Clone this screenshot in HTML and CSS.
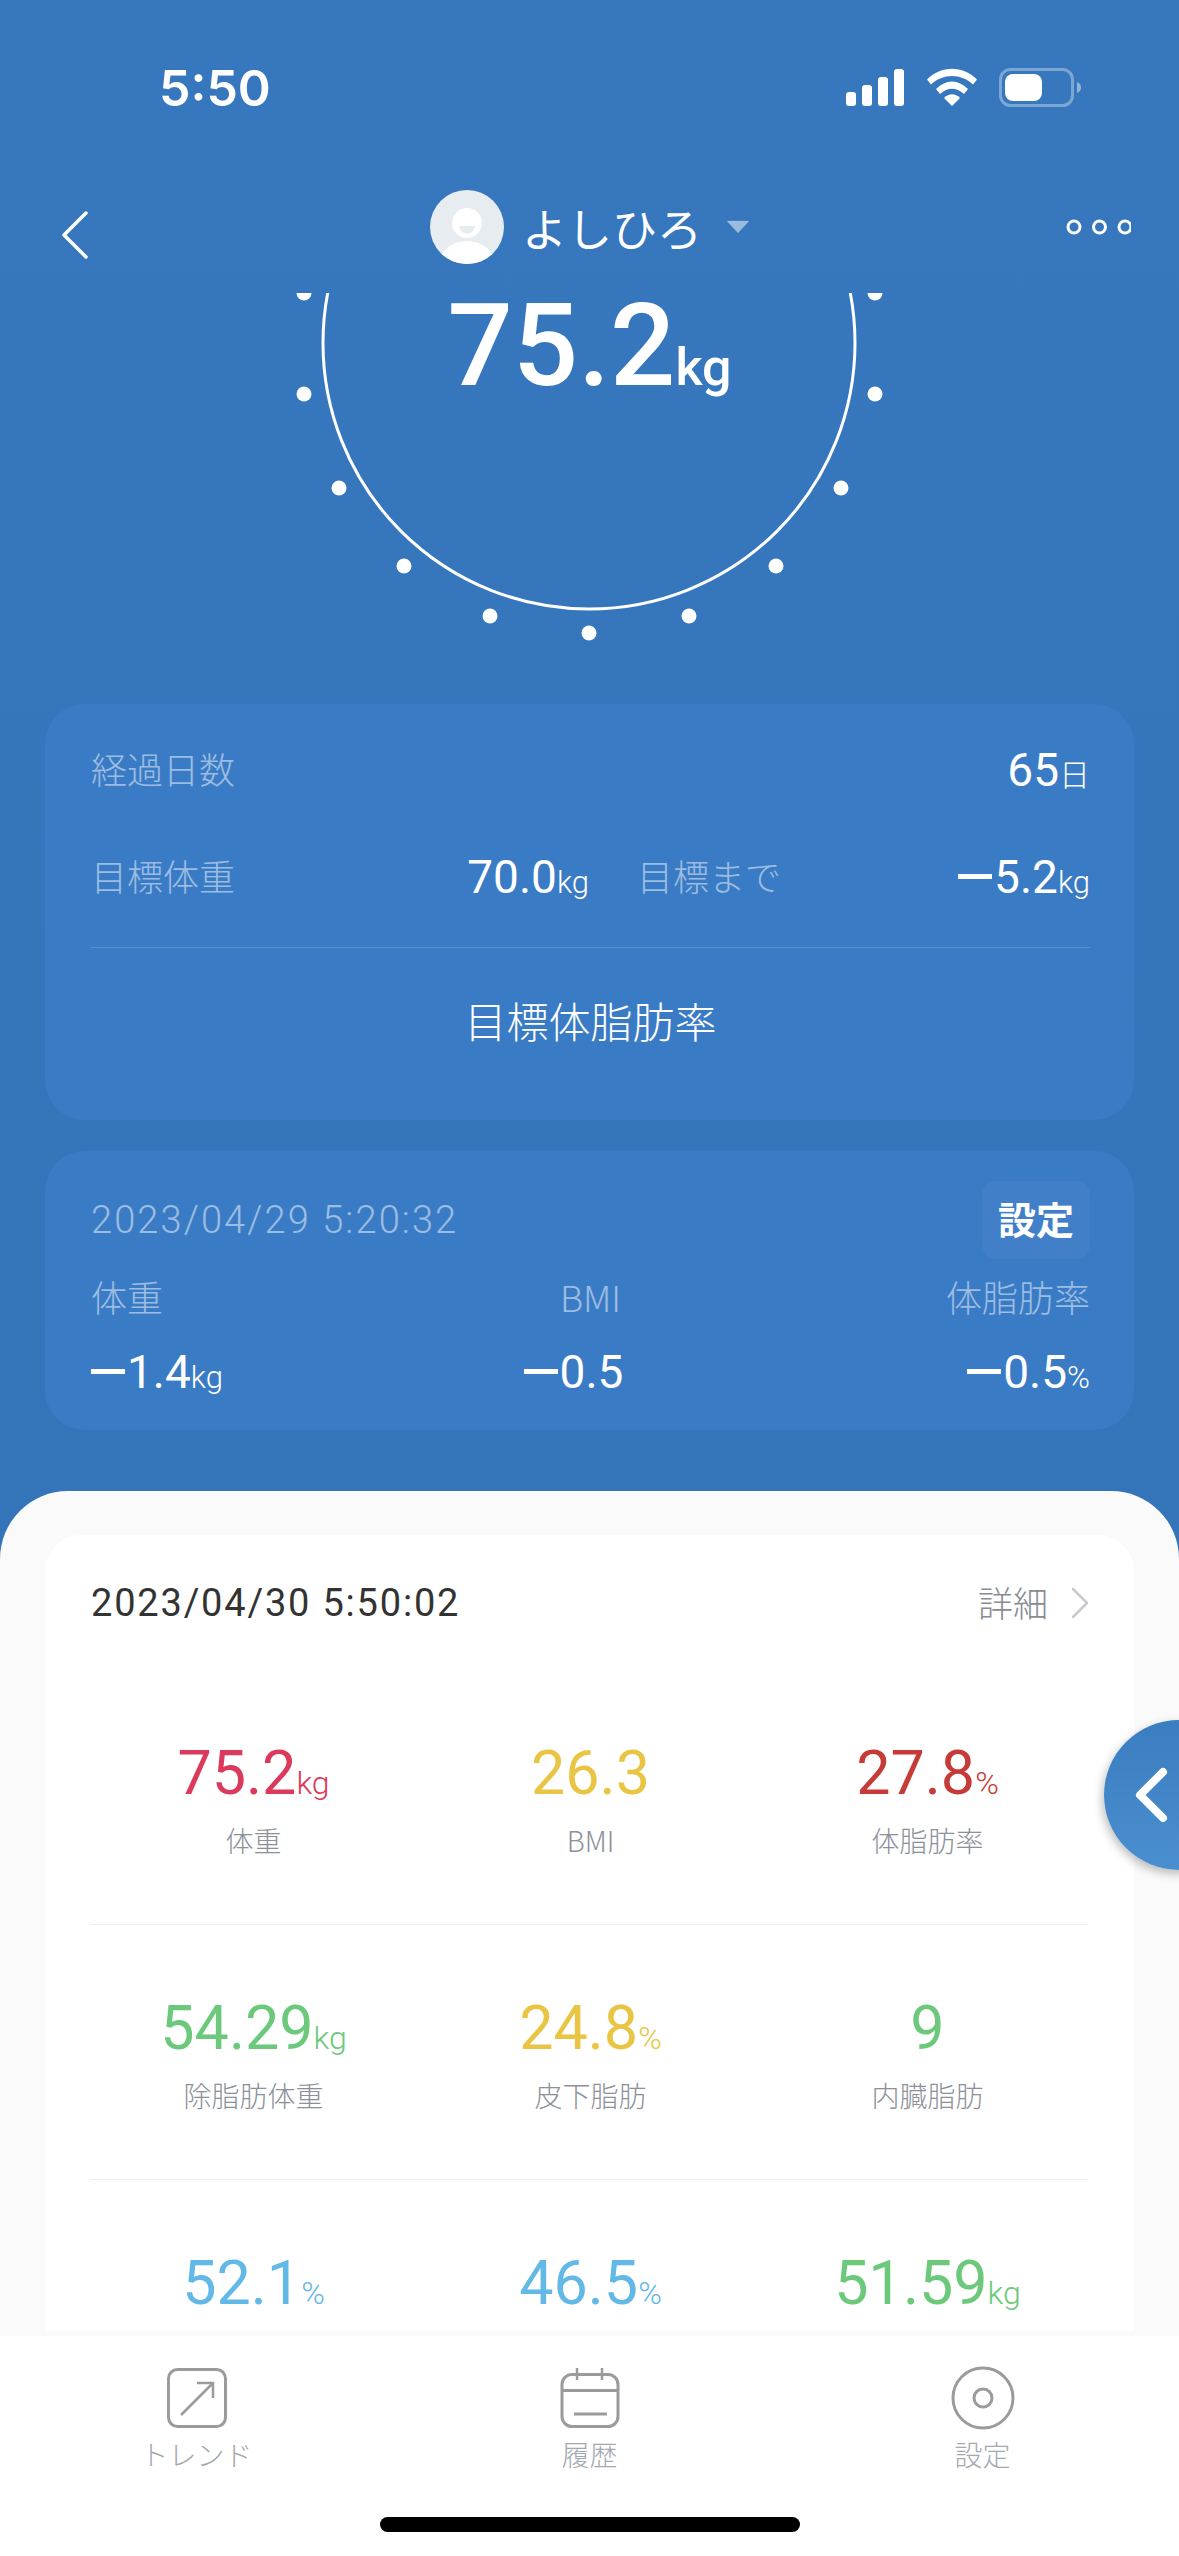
FILE: index.html
```html
<!DOCTYPE html>
<html lang="ja">
<head>
  <meta charset="UTF-8" />
  <meta name="viewport" content="width=device-width, initial-scale=1" />
  <title>体重</title>
  <link rel="stylesheet" href="styles.css">
</head>
<body>
<div class="page">

  <div class="status">
    <span class="time">5:50</span>
    <svg class="status-icons" width="240" height="44" viewBox="845 66 240 44">
      <g fill="#fff">
        <rect x="846" y="92" width="10" height="14" rx="3"/>
        <rect x="862" y="85" width="10" height="21" rx="3"/>
        <rect x="878" y="77" width="10" height="29" rx="3"/>
        <rect x="894" y="69" width="10" height="37" rx="3"/>
        <path d="M927 79.500C941 65 963 65 977 79.500L973 84.500C961 73 943 73 931 84.500Z"/>
        <path d="M936 89C946 79 958 79 968 89L964 94C956 87 948 87 940 94Z"/>
        <path d="M944 98C949 93 955 93 960 98L952 106Z"/>
        <rect x="1005" y="74" width="37" height="27" rx="8"/>
      </g>
      <rect x="1000.500" y="69.500" width="72" height="36" rx="10" fill="none" stroke="#fff" stroke-opacity=".35" stroke-width="3"/>
      <path d="M1077 82C1080 83 1081 85 1081 87.500C1081 90 1080 92 1077 93Z" fill="#fff" fill-opacity=".45"/>
    </svg>
  </div>

  <div class="nav">
    <svg class="nav-back" width="30" height="50" viewBox="0 0 30 50">
      <path d="M26 3L4 25L26 47" fill="none" stroke="#fff" stroke-width="3.500" stroke-linecap="round" stroke-linejoin="round"/>
    </svg>
    <div class="nav-user">
      <svg width="74" height="74" viewBox="0 0 74 74">
        <defs><clipPath id="ava"><circle cx="37" cy="37" r="37"/></clipPath></defs>
        <circle cx="37" cy="37" r="37" fill="#e6ecef"/>
        <circle cx="37" cy="33" r="15" fill="#fff"/>
        <path d="M29 36H45C44 46 30 46 29 36Z" fill="#e6ecef"/>
        <ellipse cx="37" cy="72" rx="27" ry="21" fill="#fff" clip-path="url(#ava)"/>
      </svg>
      <span class="nav-name">よしひろ</span>
      <svg width="24" height="14" viewBox="0 0 24 14">
        <path d="M1 1H23L12 13Z" fill="#fff" fill-opacity=".5" stroke="#fff" stroke-opacity=".1" stroke-linejoin="round"/>
      </svg>
    </div>
    <svg class="nav-more" width="66" height="18" viewBox="0 0 66 18">
      <g fill="none" stroke="#fff" stroke-width="3">
        <circle cx="9" cy="9" r="6"/>
        <circle cx="34.500" cy="9" r="6"/>
        <circle cx="60" cy="9" r="6"/>
      </g>
    </svg>
  </div>

  <div class="gauge">
    <svg width="1179" height="411" viewBox="0 293 1179 411">
      <circle cx="589" cy="343" r="266" fill="none" stroke="#fff" stroke-width="3"/>
      <g fill="#fff">
        <circle cx="304" cy="293" r="7.500"/>
        <circle cx="304" cy="394" r="7.500"/>
        <circle cx="339" cy="488" r="7.500"/>
        <circle cx="404" cy="566" r="7.500"/>
        <circle cx="490" cy="616" r="7.500"/>
        <circle cx="589" cy="633" r="7.500"/>
        <circle cx="689" cy="616" r="7.500"/>
        <circle cx="776" cy="566" r="7.500"/>
        <circle cx="841" cy="488" r="7.500"/>
        <circle cx="875" cy="394" r="7.500"/>
        <circle cx="875" cy="293" r="7.500"/>
      </g>
    </svg>
    <div class="gauge-value">75.2<span class="gauge-unit">kg</span></div>
  </div>

  <section class="goal-card">
    <div class="goal-row">
      <span class="dim">経過日数</span>
      <span class="num">65<small>日</small></span>
    </div>
    <div class="goal-split">
      <div class="goal-row">
        <span class="dim">目標体重</span>
        <span class="num">70.0<small>kg</small></span>
      </div>
      <div class="goal-row">
        <span class="dim">目標まで</span>
        <span class="num"><i class="minus"></i>5.2<small>kg</small></span>
      </div>
    </div>
    <div class="goal-link">目標体脂肪率</div>
  </section>

  <section class="prev-card">
    <div class="prev-head">
      <span class="prev-date">2023/04/29 5:20:32</span>
      <span class="prev-btn">設定</span>
    </div>
    <div class="prev-grid">
      <span class="dim">体重</span>
      <span class="dim">BMI</span>
      <span class="dim">体脂肪率</span>
      <span class="num"><i class="minus"></i>1.4<small>kg</small></span>
      <span class="num no-unit"><i class="minus"></i>0.5</span>
      <span class="num"><i class="minus"></i>0.5<small>%</small></span>
    </div>
  </section>

  <main class="sheet">
    <section class="data-card">
      <div class="data-head">
        <span class="data-date">2023/04/30 5:50:02</span>
        <span class="data-more"><span class="data-more-text">詳細</span>
          <svg width="20" height="34" viewBox="0 0 20 34">
            <path d="M3 3L17 17L3 31" fill="none" stroke="#c8cacf" stroke-width="2.500" stroke-linecap="round" stroke-linejoin="round"/>
          </svg>
        </span>
      </div>

      <div class="metric-row">
        <div class="metric"><div class="val red">75.2<small>kg</small></div><div class="lbl">体重</div></div>
        <div class="metric"><div class="val yellow">26.3</div><div class="lbl">BMI</div></div>
        <div class="metric"><div class="val dark-red">27.8<small>%</small></div><div class="lbl">体脂肪率</div></div>
      </div>
      <div class="metric-row">
        <div class="metric"><div class="val green">54.29<small>kg</small></div><div class="lbl">除脂肪体重</div></div>
        <div class="metric"><div class="val yellow">24.8<small>%</small></div><div class="lbl">皮下脂肪</div></div>
        <div class="metric"><div class="val green">9</div><div class="lbl">内臓脂肪</div></div>
      </div>
      <div class="metric-row">
        <div class="metric"><div class="val blue">52.1<small>%</small></div></div>
        <div class="metric"><div class="val blue">46.5<small>%</small></div></div>
        <div class="metric"><div class="val green">51.59<small>kg</small></div></div>
      </div>
    </section>
  </main>

  <nav class="tabbar">
    <div class="tab">
      <svg width="64" height="64" viewBox="0 0 64 64">
        <rect x="3.500" y="3.500" width="57" height="57" rx="9" fill="none" stroke="#9b9b9b" stroke-width="3"/>
        <path d="M16 49L48 17M32 17H48V32" fill="none" stroke="#9b9b9b" stroke-width="2.500"/>
      </svg>
      <span>トレンド</span>
    </div>
    <div class="tab">
      <svg width="64" height="64" viewBox="0 0 64 64">
        <g fill="none" stroke="#9b9b9b" stroke-width="3">
          <rect x="4" y="8.500" width="56" height="52" rx="10"/>
          <path d="M4 24.500H60" />
          <path d="M19 2V14M44 2V14" stroke-width="2.500"/>
          <path d="M16 48H49" />
        </g>
      </svg>
      <span>履歴</span>
    </div>
    <div class="tab">
      <svg width="64" height="64" viewBox="0 0 64 64">
        <circle cx="32" cy="32" r="30" fill="none" stroke="#9b9b9b" stroke-width="3"/>
        <circle cx="32" cy="32" r="9" fill="none" stroke="#9b9b9b" stroke-width="3"/>
      </svg>
      <span>設定</span>
    </div>
    <div class="home-bar"></div>
  </nav>

  <div class="side-btn">
    <svg width="34" height="56" viewBox="0 0 34 56">
      <path d="M29 5L6 28L29 51" fill="none" stroke="#fff" stroke-width="8" stroke-linecap="round" stroke-linejoin="round"/>
    </svg>
  </div>

</div>
</body>
</html>
```

FILE: styles.css
```css
* {
  box-sizing: border-box;
}
body {
  margin: 0;
  background: #fff;
  font-family: "Noto Sans CJK JP", sans-serif;
}
.page {
  position: relative;
  width: 1179px;
  height: 2556px;
  overflow: hidden;
  display: flex;
  flex-direction: column;
  background: linear-gradient(#3677bd, #3475ba 1500px);
  color: #fff;
}

/* status bar */
.status {
  height: 176px;
  flex: none;
  display: flex;
  justify-content: space-between;
  align-items: center;
  padding: 0 94px 0 159px;
}
.time {
  font-family: Inter, sans-serif;
  font-size: 50px;
  font-weight: 600;
}
.status-icons {
  display: block;
}

/* nav */
.nav {
  height: 102px;
  flex: none;
  margin-bottom: 15px;
  display: grid;
  grid-template-columns: 1fr auto 1fr;
  align-items: center;
  padding: 0 48px;
}
.nav-back {
  margin: 16px 0 0 12px;
}
.nav-user {
  display: flex;
  align-items: center;
  margin-left: 1px;
}
.nav-name {
  font-size: 45px;
  margin: 0 24px 0 18px;
}
.nav-more {
  justify-self: end;
}

/* gauge */
.gauge {
  position: relative;
  height: 411px;
  flex: none;
}
.gauge svg {
  display: block;
}
.gauge-value {
  position: absolute;
  top: 0;
  left: 0;
  right: 0;
  text-align: center;
  font-family: Roboto, sans-serif;
  font-size: 115px;
  font-weight: 500;
  line-height: 106px;
}
.gauge-unit {
  font-size: 52px;
  font-weight: 500;
}

/* blue cards */
.goal-card, .prev-card {
  flex: none;
  margin: 0 45px;
  padding: 0 44px 0 46px;
  background: #3a7bc5;
  border-radius: 40px;
}
.goal-card {
  height: 416px;
  padding-top: 34px;
}
.prev-card {
  height: 279px;
  margin-top: 31px;
  padding-top: 30px;
}
.dim {
  margin-bottom: 5px;
  font-size: 36px;
  font-weight: 300;
  color: rgba(255, 255, 255, 0.5);
  white-space: nowrap;
}
.num {
  font-family: Roboto, sans-serif;
  font-size: 46px;
  white-space: nowrap;
}
.num small {
  font-family: Roboto, "Noto Sans CJK JP", sans-serif;
  font-size: 31px;
  font-weight: 300;
}
.minus {
  display: inline-block;
  width: 34px;
  height: 5px;
  margin-right: 2px;
  background: #fff;
  vertical-align: 14px;
}
.goal-row {
  height: 64px;
  display: flex;
  justify-content: space-between;
  align-items: center;
}
.goal-split {
  margin-top: 43px;
  padding-bottom: 38px;
  display: grid;
  grid-template-columns: 498px 1fr;
  column-gap: 48px;
  border-bottom: 1px solid rgba(255, 255, 255, 0.15);
}
.goal-link {
  height: 143px;
  display: flex;
  justify-content: center;
  align-items: center;
  font-size: 42px;
  font-weight: 300;
}
.prev-head {
  height: 78px;
  display: flex;
  justify-content: space-between;
  align-items: center;
}
.prev-date {
  font-family: Roboto, sans-serif;
  font-size: 38px;
  font-weight: 300;
  letter-spacing: 2.100px;
  color: rgba(255, 255, 255, 0.5);
}
.prev-btn {
  width: 108px;
  height: 78px;
  padding-bottom: 5px;
  display: flex;
  justify-content: center;
  align-items: center;
  background: #4180c8;
  border-radius: 14px;
  font-size: 38px;
  font-weight: 700;
}
.prev-grid {
  display: grid;
  grid-template-columns: 1fr 1fr 1fr;
  grid-auto-rows: 78px 70px;
  align-items: center;
}
.prev-grid > :nth-child(3n+2) {
  text-align: center;
}
.prev-grid > :nth-child(3n) {
  text-align: right;
}
.no-unit {
  padding-right: 34px;
}

/* white sheet */
.sheet {
  flex: 1;
  min-height: 0;
  margin-top: 61px;
  padding: 44px 45px 5px;
  background: #fafafa;
  border-radius: 68px 68px 0 0;
  display: flex;
}
.data-card {
  flex: 1;
  overflow: hidden;
  background: #fff;
  border-radius: 36px 36px 0 0;
  padding: 0 44px 0 46px;
}
.data-head {
  height: 135px;
  display: flex;
  justify-content: space-between;
  align-items: center;
}
.data-date {
  font-family: Roboto, sans-serif;
  font-size: 38px;
  letter-spacing: 1.800px;
  color: #333;
}
.data-more {
  display: flex;
  align-items: center;
  gap: 22px;
  font-size: 35px;
  font-weight: 300;
  color: #888b94;
}
.data-more-text {
  margin-bottom: 3px;
}
.metric-row {
  height: 255px;
  padding-top: 68px;
  margin: 0 -6px;
  display: grid;
  grid-template-columns: 1fr 1fr 1fr;
  text-align: center;
  background: linear-gradient(#eee, #eee) 5px 100% / 998px 1px no-repeat;
}
.val {
  font-family: Roboto, sans-serif;
  font-size: 61px;
  line-height: 70px;
}
.val small {
  font-size: 32px;
  font-weight: 300;
  line-height: 0;
}
.lbl {
  margin-top: 12px;
  font-size: 28px;
  line-height: 40px;
  font-weight: 300;
  color: #8d909a;
}
.red { color: #dc3a5c; }
.yellow { color: #e9c543; }
.dark-red { color: #c63b37; }
.green { color: #6cc97c; }
.blue { color: #62b8e6; }

/* tab bar */
.tabbar {
  position: relative;
  height: 220px;
  flex: none;
  padding-top: 30px;
  background: #fff;
  display: grid;
  grid-template-columns: 1fr 1fr 1fr;
  align-items: start;
}
.tab {
  display: flex;
  flex-direction: column;
  align-items: center;
}
.tab span {
  margin-top: 6px;
  font-size: 28px;
  line-height: 36px;
  font-weight: 300;
  color: #a5a8b0;
}
.home-bar {
  position: absolute;
  left: 380px;
  top: 181px;
  width: 420px;
  height: 15px;
  border-radius: 8px;
  background: #000;
}

/* floating side button */
.side-btn {
  position: absolute;
  left: 1104px;
  top: 1720px;
  width: 150px;
  height: 150px;
  padding: 47px 0 0 30px;
  border-radius: 50%;
  background: linear-gradient(#3a7dc0, #4a8fcf);
  box-shadow: -2px 4px 10px rgba(0, 0, 0, 0.25);
}
.side-btn svg {
  display: block;
}
```
